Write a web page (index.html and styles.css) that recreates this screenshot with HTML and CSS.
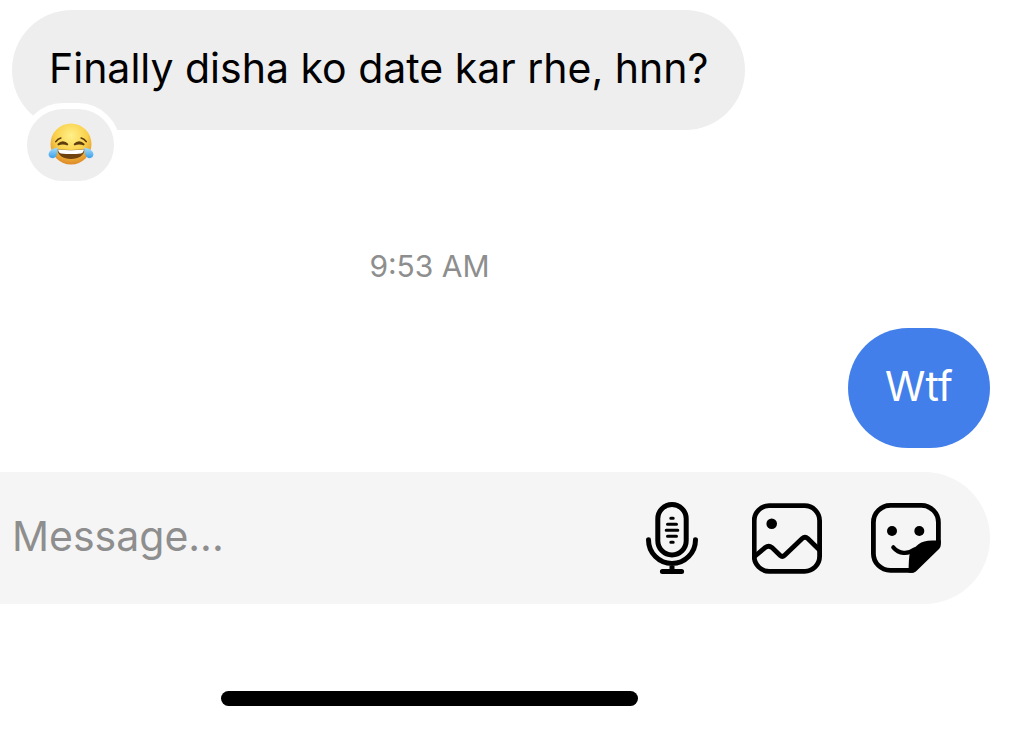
FILE: index.html
```html
<!DOCTYPE html>
<html lang="en">

<head>
    <meta charset="UTF-8">
    <meta name="viewport" content="width=device-width, initial-scale=1.0">
    <title>Chat</title>
    <link rel="stylesheet" href="styles.css">
</head>

<body>
    <main class="chat">
        <div class="message received">
            <p class="bubble">Finally disha ko date kar rhe, hnn?</p>
            <span class="reaction">
                <svg viewBox="0 0 48 48" role="img" aria-label="Face with tears of joy">
                    <defs>
                        <radialGradient id="face" cx="0.5" cy="0.3" r="0.72">
                            <stop offset="0" stop-color="#fff08a" />
                            <stop offset="0.55" stop-color="#fad04a" />
                            <stop offset="1" stop-color="#dc8424" />
                        </radialGradient>
                        <linearGradient id="tear" x1="0" y1="0" x2="0" y2="1">
                            <stop offset="0" stop-color="#a4defb" />
                            <stop offset="1" stop-color="#3a9fec" />
                        </linearGradient>
                    </defs>
                    <circle cx="24" cy="23" r="20.5" fill="url(#face)" />
                    <path d="M10.3 28.3Q24 29.6 37.7 28.3C37 34.5 32 38 24 38S11 34.5 10.3 28.3Z" fill="#6f420f" />
                    <path d="M11 28.6Q24 29.9 37 28.6C36.6 31 35.6 32.2 34 32.4Q24 33.8 14 32.4C12.4 32.2 11.4 31 11 28.6Z" fill="#fff" />
                    <g fill="none" stroke="#5d3c0e" stroke-width="1.7" stroke-linecap="round">
                        <path d="M10.8 23.6Q16 18.8 20.8 23.6Q16 21.8 10.8 23.6Z" />
                        <path d="M37.2 23.6Q32 18.8 27.2 23.6Q32 21.8 37.2 23.6Z" />
                        <path d="M8.8 20.6Q10.6 17.8 13.8 17" />
                        <path d="M39.2 20.6Q37.4 17.8 34.2 17" />
                    </g>
                    <path d="M10.6 26.6C5.5 27.4 1.6 30 1.6 33.6C1.8 38 8.2 38.6 9.8 33.8C10.6 31.2 10.6 29 10.6 26.6Z" fill="url(#tear)" />
                    <path d="M37.4 26.6C42.5 27.4 46.4 30 46.4 33.6C46.2 38 39.8 38.6 38.2 33.8C37.4 31.2 37.4 29 37.4 26.6Z" fill="url(#tear)" />
                </svg>
            </span>
        </div>

        <time class="time" datetime="09:53">9:53 AM</time>

        <div class="message sent">
            <p class="bubble">Wtf</p>
        </div>

        <form class="composer">
            <input type="text" class="field" placeholder="Message..." aria-label="Message">
            <button type="button" class="tool" aria-label="Voice message">
                <svg viewBox="0 0 72 72" fill="none" stroke="#000" stroke-width="5" stroke-linecap="round">
                    <rect x="23.8" y="2.5" width="28.4" height="50.4" rx="14.2" />
                    <path d="M14.5 37.7A23.5 23.8 0 0 0 61.5 37.7M38 62V69M28.4 69.5H47.6" />
                    <path d="M36.8 16.3H39.2M33.5 22.3H42.5M32.2 28.3H43.8M33.5 34.3H42.5M36.8 40.3H39.2" stroke-width="3" />
                </svg>
            </button>
            <button type="button" class="tool" aria-label="Photo">
                <svg viewBox="0 0 72 72" fill="none" stroke="#000" stroke-width="4.8">
                    <rect x="2.2" y="3.7" width="65.4" height="65.6" rx="15" />
                    <path d="M2.5 54.5L13.4 45.4Q16.7 42.8 20 45.6L28.2 53.4Q30.3 55.4 32.4 53.4L50.2 36.6Q53 34 55.8 36.6L67.5 48" />
                    <circle cx="19.7" cy="21.7" r="5.3" fill="#000" stroke="none" />
                </svg>
            </button>
            <button type="button" class="tool" aria-label="Stickers">
                <svg viewBox="0 0 72 72" fill="none" stroke="#000" stroke-width="4.8" stroke-linecap="round">
                    <path d="M42 68.4H20.4A17 17 0 0 1 3.4 51.4V20.4A17 17 0 0 1 20.4 3.4H51.4A17 17 0 0 1 68.4 20.4V41" />
                    <path d="M23.3 45.3C29 52.2 38 52.4 44.5 47.5" stroke-width="4.2" />
                    <path d="M70.8 38.6H62C56 38.6 52 39.8 48.5 42.3L40 49.5C38.9 55 38.6 62 38.6 70.8H42C44 70.8 45.2 70.2 46.4 69L69 47C70.2 45.8 70.8 44.6 70.8 42.6Z" fill="#000" stroke="none" />
                    <circle cx="22" cy="29" r="5" fill="#000" stroke="none" />
                    <circle cx="49.3" cy="29" r="5" fill="#000" stroke="none" />
                </svg>
            </button>
        </form>

        <div class="home-bar"></div>
    </main>
</body>

</html>
```

FILE: styles.css
```css
* {
    margin: 0;
    padding: 0;
    box-sizing: border-box;
}

body {
    background-color: #fff;
    color: #000;
    font-family: Inter, "Liberation Sans", sans-serif;
    font-size: 41px;
}

.chat {
    display: flex;
    flex-direction: column;
    padding: 10px 23px 23px 0;
    overflow: hidden;
}

.message {
    position: relative;
}

.bubble {
    padding: 32px 37px 36px;
    border-radius: 60px;
    line-height: 52px;
}

.received {
    align-self: flex-start;
    margin-left: 12px;
}

.received .bubble {
    background-color: #eee;
}

.sent {
    align-self: flex-end;
}

.sent .bubble {
    background-color: #427fea;
    color: #fff;
}

.reaction {
    position: absolute;
    top: 93px;
    left: 9px;
    display: flex;
    align-items: center;
    justify-content: center;
    width: 99px;
    height: 84px;
    border: 6px solid #fff;
    border-radius: 42px;
    background-color: #eee;
}

.reaction svg {
    width: 48px;
    height: 48px;
}

/* the time and the home bar share one centre line */
.time,
.home-bar {
    align-self: center;
    margin-right: 131px;
}

.time {
    margin-top: 116px;
    margin-bottom: 42px;
    color: #8e8e8e;
    font-size: 30px;
    line-height: 40px;
}

.composer {
    display: flex;
    align-items: center;
    gap: 46px;
    margin-top: 24px;
    padding: 30px 48px 30px 12px;
    border-radius: 0 66px 66px 0;
    background-color: #f5f5f6;
}

.field {
    flex: 1;
    min-width: 0;
    height: 72px;
    padding-bottom: 4px;
    border: none;
    outline: none;
    background: none;
    color: #000;
    font: inherit;
}

.field::placeholder {
    color: #8e8e8e;
    opacity: 1;
}

.tool {
    flex: none;
    width: 72px;
    height: 72px;
    border: none;
    background: none;
    cursor: pointer;
}

.tool svg {
    display: block;
    width: 100%;
}

.home-bar {
    width: 417px;
    height: 15px;
    margin-top: 87px;
    border-radius: 8px;
    background-color: #000;
}
```
